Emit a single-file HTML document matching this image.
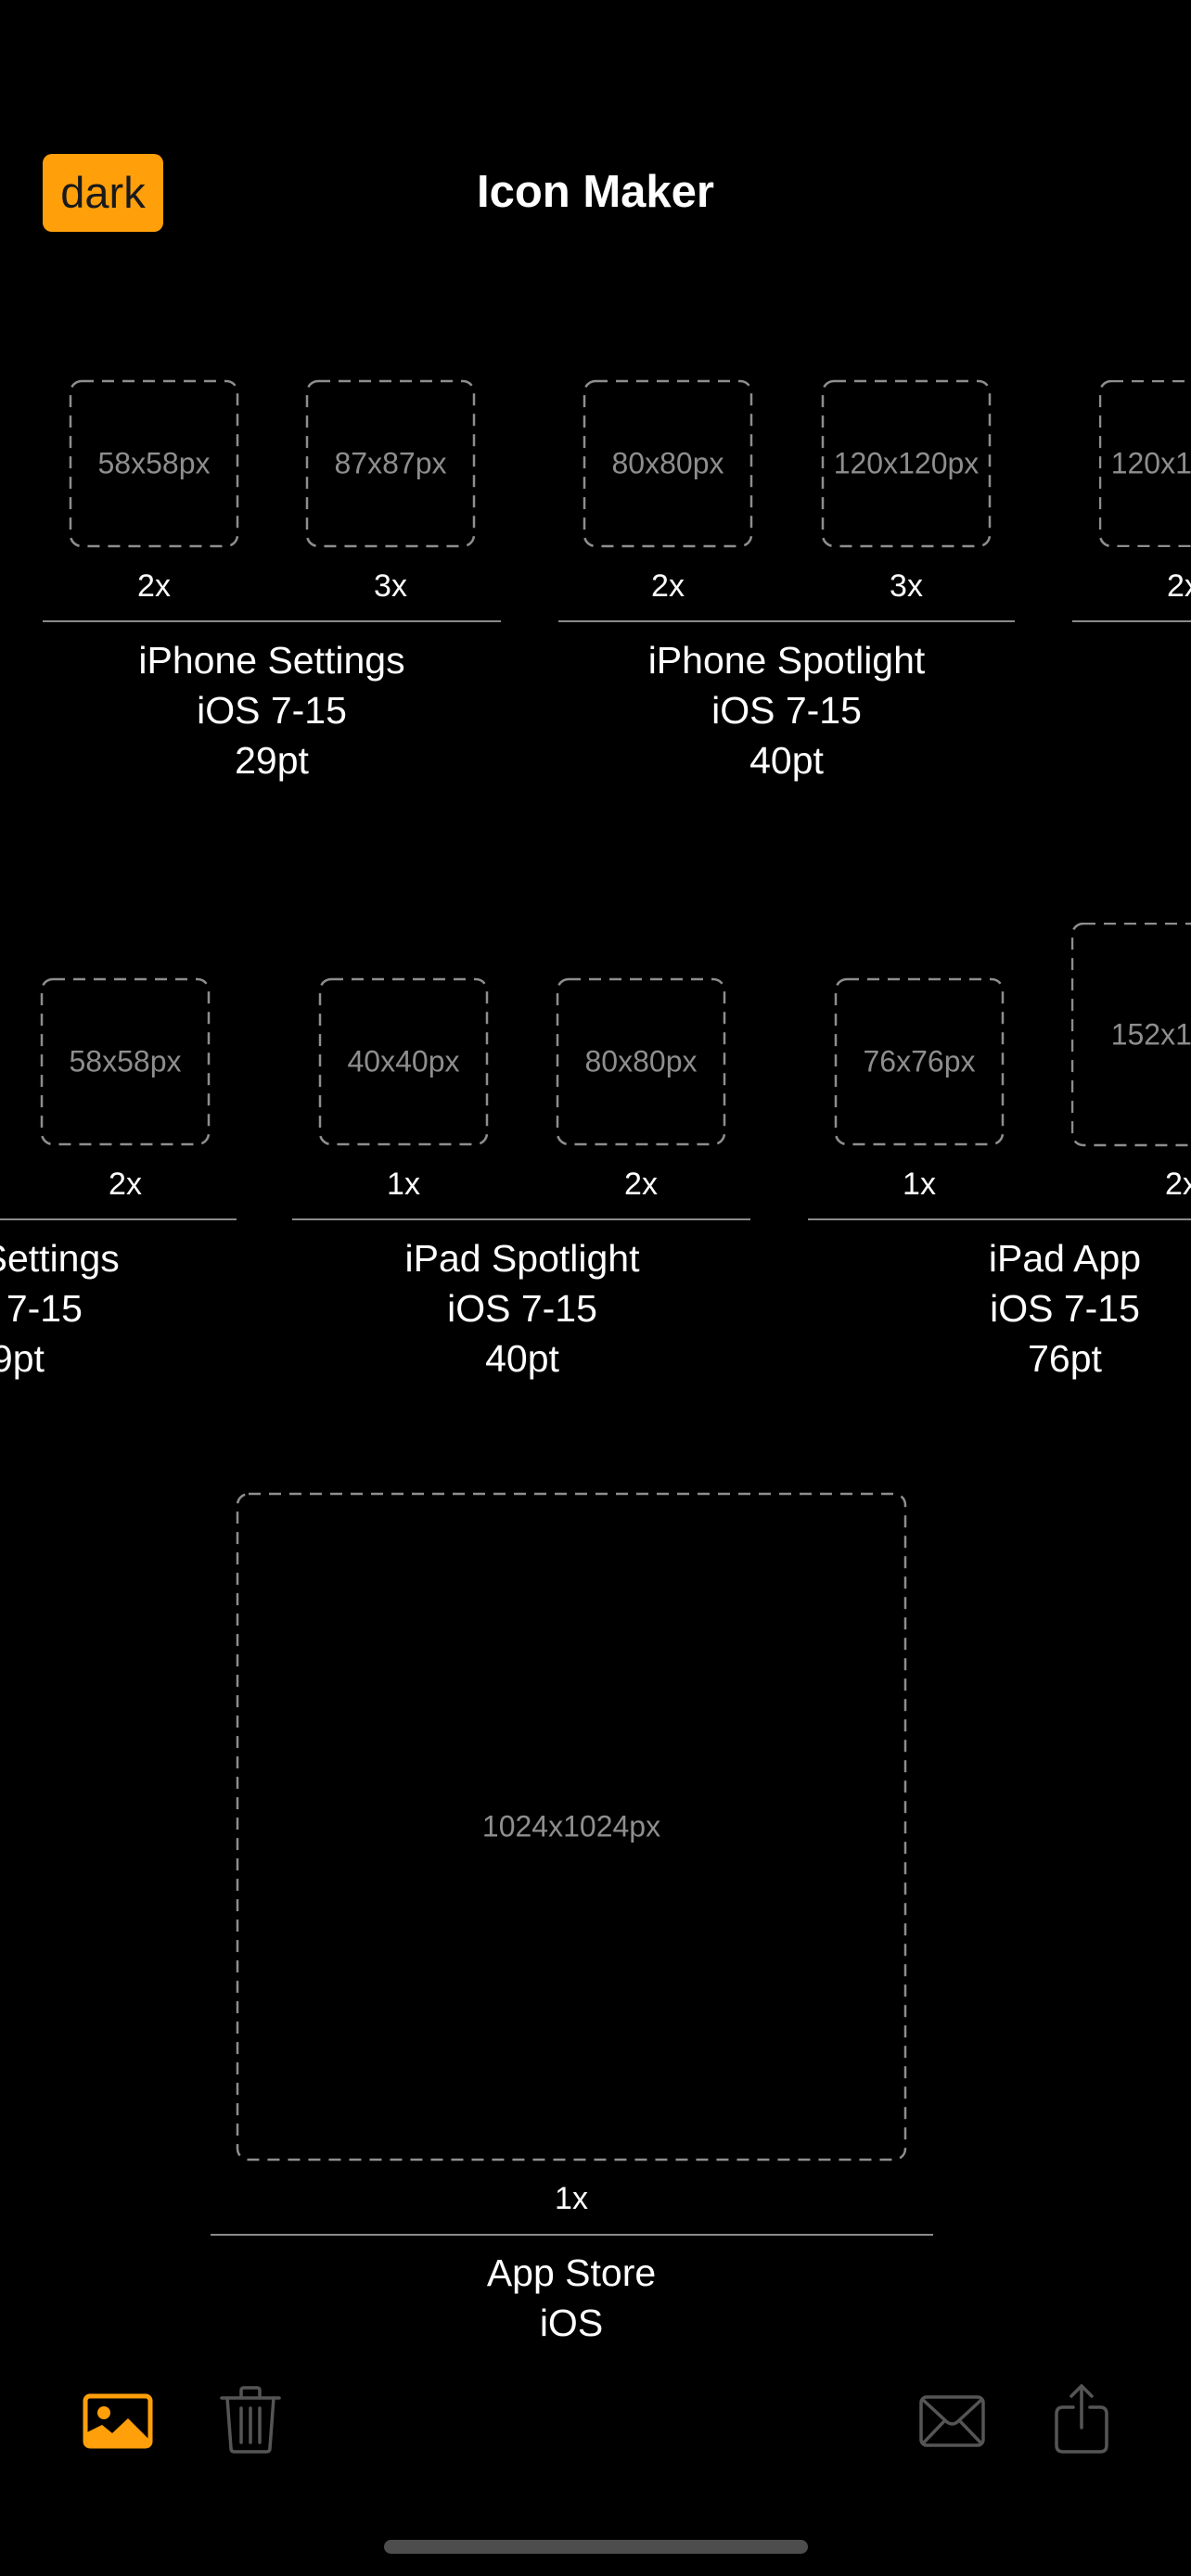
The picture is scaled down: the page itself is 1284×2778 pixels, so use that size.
<!DOCTYPE html>
<html><head><meta charset="utf-8"><style>
html,body{margin:0;padding:0;background:#000;width:1284px;height:2778px;overflow:hidden;}
body{position:relative;font-family:"Liberation Sans",sans-serif;color:#fff;}
.a{position:absolute;}
.box{position:absolute;}
.box svg{position:absolute;left:0;top:0;overflow:visible;}
.box span{position:absolute;left:-40px;right:-40px;top:50%;transform:translateY(-50%);text-align:center;color:#8e8e8e;font-size:32px;}
.sc{position:absolute;width:120px;text-align:center;font-size:34px;line-height:40px;}
.ln{position:absolute;height:2px;background:#8a8a8a;}
.t{position:absolute;width:600px;text-align:center;font-size:41px;line-height:54px;}
</style></head><body>

<div class="a" style="left:46px;top:166px;width:130px;height:84px;background:#ff9f0a;border-radius:10px;"></div>
<div class="a" style="left:46px;top:166px;width:130px;height:84px;line-height:84px;text-align:center;font-size:47px;color:#1a1a1a;">dark</div>
<div class="a" style="left:442px;top:177px;width:400px;text-align:center;font-size:49px;line-height:60px;font-weight:bold;">Icon Maker</div>

<!-- Row 1 -->
<div class="box" style="left:75px;top:410px;width:182px;height:180px;"><svg width="182" height="180"><rect x="1" y="1" width="180" height="178" rx="12" fill="none" stroke="#8e8e8e" stroke-width="2.5" stroke-dasharray="13 9"/></svg><span>58x58px</span></div>
<div class="box" style="left:330px;top:410px;width:182px;height:180px;"><svg width="182" height="180"><rect x="1" y="1" width="180" height="178" rx="12" fill="none" stroke="#8e8e8e" stroke-width="2.5" stroke-dasharray="13 9"/></svg><span>87x87px</span></div>
<div class="box" style="left:629px;top:410px;width:182px;height:180px;"><svg width="182" height="180"><rect x="1" y="1" width="180" height="178" rx="12" fill="none" stroke="#8e8e8e" stroke-width="2.5" stroke-dasharray="13 9"/></svg><span>80x80px</span></div>
<div class="box" style="left:886px;top:410px;width:182px;height:180px;"><svg width="182" height="180"><rect x="1" y="1" width="180" height="178" rx="12" fill="none" stroke="#8e8e8e" stroke-width="2.5" stroke-dasharray="13 9"/></svg><span>120x120px</span></div>
<div class="box" style="left:1185px;top:410px;width:99px;height:180px;overflow:hidden;"><svg width="182" height="180"><rect x="1" y="1" width="180" height="178" rx="12" fill="none" stroke="#8e8e8e" stroke-width="2.5" stroke-dasharray="13 9"/></svg><span style="left:0;right:auto;width:182px;">120x120px</span></div>

<div class="sc" style="left:106px;top:612px;">2x</div>
<div class="sc" style="left:361px;top:612px;">3x</div>
<div class="sc" style="left:660px;top:612px;">2x</div>
<div class="sc" style="left:917px;top:612px;">3x</div>
<div class="a" style="left:1258px;top:612px;font-size:34px;line-height:40px;">2x</div>

<div class="ln" style="left:46px;top:669px;width:494px;"></div>
<div class="ln" style="left:602px;top:669px;width:492px;"></div>
<div class="ln" style="left:1156px;top:669px;width:128px;"></div>

<div class="t" style="left:-7px;top:685px;">iPhone Settings<br>iOS 7-15<br>29pt</div>
<div class="t" style="left:548px;top:685px;">iPhone Spotlight<br>iOS 7-15<br>40pt</div>

<!-- Row 2 -->
<div class="box" style="left:44px;top:1055px;width:182px;height:180px;"><svg width="182" height="180"><rect x="1" y="1" width="180" height="178" rx="12" fill="none" stroke="#8e8e8e" stroke-width="2.5" stroke-dasharray="13 9"/></svg><span>58x58px</span></div>
<div class="box" style="left:344px;top:1055px;width:182px;height:180px;"><svg width="182" height="180"><rect x="1" y="1" width="180" height="178" rx="12" fill="none" stroke="#8e8e8e" stroke-width="2.5" stroke-dasharray="13 9"/></svg><span>40x40px</span></div>
<div class="box" style="left:600px;top:1055px;width:182px;height:180px;"><svg width="182" height="180"><rect x="1" y="1" width="180" height="178" rx="12" fill="none" stroke="#8e8e8e" stroke-width="2.5" stroke-dasharray="13 9"/></svg><span>80x80px</span></div>
<div class="box" style="left:900px;top:1055px;width:182px;height:180px;"><svg width="182" height="180"><rect x="1" y="1" width="180" height="178" rx="12" fill="none" stroke="#8e8e8e" stroke-width="2.5" stroke-dasharray="13 9"/></svg><span>76x76px</span></div>
<div class="box" style="left:1155px;top:995px;width:129px;height:242px;overflow:hidden;"><svg width="242" height="241"><rect x="1" y="1" width="240" height="239" rx="12" fill="none" stroke="#8e8e8e" stroke-width="2.5" stroke-dasharray="13 9"/></svg><span style="left:0;right:auto;width:242px;">152x152px</span></div>

<div class="sc" style="left:75px;top:1257px;">2x</div>
<div class="sc" style="left:375px;top:1257px;">1x</div>
<div class="sc" style="left:631px;top:1257px;">2x</div>
<div class="sc" style="left:931px;top:1257px;">1x</div>
<div class="a" style="left:1256px;top:1257px;font-size:34px;line-height:40px;">2x</div>

<div class="ln" style="left:0;top:1314px;width:255px;"></div>
<div class="ln" style="left:315px;top:1314px;width:494px;"></div>
<div class="ln" style="left:871px;top:1314px;width:413px;"></div>

<div class="a" style="left:0;top:1330px;width:400px;height:170px;overflow:hidden;"><div class="t" style="left:-292px;top:0;">iPad Settings<br>iOS 7-15<br>29pt</div></div>
<div class="t" style="left:263px;top:1330px;">iPad Spotlight<br>iOS 7-15<br>40pt</div>
<div class="a" style="left:884px;top:1330px;width:400px;height:170px;overflow:hidden;"><div class="t" style="left:-36px;top:0;width:600px;">iPad App<br>iOS 7-15<br>76pt</div></div>

<!-- Row 3 -->
<div class="box" style="left:255px;top:1610px;width:722px;height:720px;"><svg width="722" height="720"><rect x="1" y="1" width="720" height="718" rx="12" fill="none" stroke="#8e8e8e" stroke-width="2.5" stroke-dasharray="13 9"/></svg><span>1024x1024px</span></div>
<div class="sc" style="left:556px;top:2351px;">1x</div>
<div class="ln" style="left:227px;top:2409px;width:779px;"></div>
<div class="t" style="left:316px;top:2424px;">App Store<br>iOS</div>

<!-- Toolbar -->
<svg class="a" style="left:88px;top:2580px;" width="78" height="62" viewBox="0 0 78 62">
<rect x="4" y="4" width="70" height="54" rx="5" fill="none" stroke="#ff9f0a" stroke-width="5"/>
<circle cx="24" cy="22" r="7" fill="#ff9f0a"/>
<path d="M4 44 L22 35 L33 44 L50 28 L74 52 L74 58 L4 58 Z" fill="#ff9f0a"/>
</svg>
<svg class="a" style="left:236px;top:2572px;" width="68" height="76" viewBox="0 0 68 76" fill="none" stroke="#555" stroke-width="3.5" stroke-linecap="round" stroke-linejoin="round">
<path d="M3 14 H65"/>
<path d="M24 14 V6 Q24 3 27 3 H41 Q44 3 44 6 V14"/>
<path d="M9 14 L13 68 Q13 72 17 72 H51 Q55 72 55 68 L59 14"/>
<path d="M24 25 V62 M34 25 V62 M44 25 V62"/>
</svg>
<svg class="a" style="left:990px;top:2582px;" width="73" height="58" viewBox="0 0 73 58" fill="none" stroke="#555" stroke-width="3.5" stroke-linejoin="round">
<rect x="3" y="3" width="67" height="52" rx="6"/>
<path d="M5 6 L31 30 Q36.5 34 42 30 L68 6"/>
<path d="M5 53 L28 29 M68 53 L45 29"/>
</svg>
<svg class="a" style="left:1136px;top:2570px;" width="60" height="78" viewBox="0 0 60 78" fill="none" stroke="#555" stroke-width="3.5" stroke-linecap="round" stroke-linejoin="round">
<path d="M30 3 V48"/>
<path d="M19 14 L30 3 L41 14"/>
<path d="M21 26 H10 Q3 26 3 33 V67 Q3 74 10 74 H50 Q57 74 57 67 V33 Q57 26 50 26 H39"/>
</svg>

<div class="a" style="left:414px;top:2739px;width:457px;height:15px;border-radius:8px;background:#4d4d4d;"></div>
</body></html>
